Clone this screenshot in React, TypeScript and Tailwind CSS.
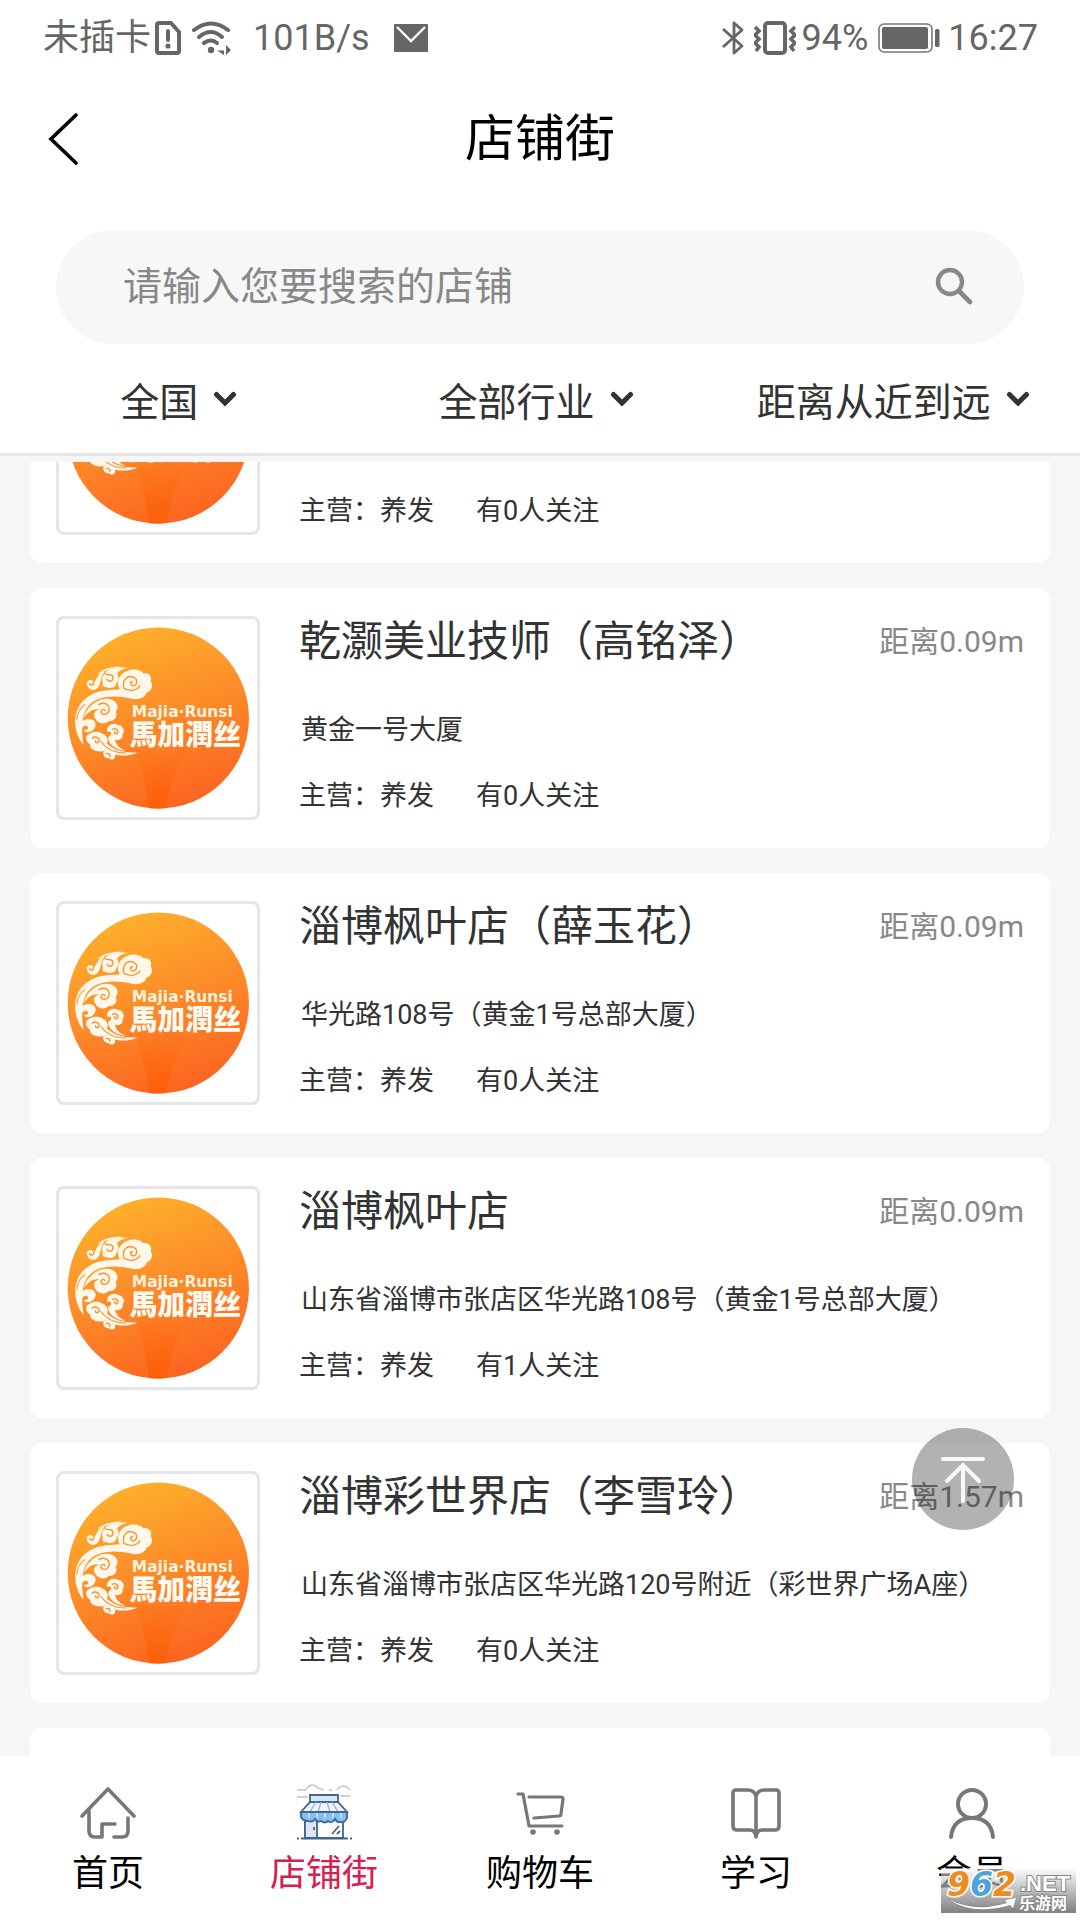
import { useLayoutEffect, useRef, useState } from "react";

type Shop = {
  id: number;
  name: string;
  address: string;
  business: string;
  followers: number;
  distance: string;
};

const shops: Shop[] = [
  { id: 1, name: "乾灏美业技师", address: "黄金一号大厦", business: "养发", followers: 0, distance: "0.09m" },
  { id: 2, name: "乾灏美业技师（高铭泽）", address: "黄金一号大厦", business: "养发", followers: 0, distance: "0.09m" },
  { id: 3, name: "淄博枫叶店（薛玉花）", address: "华光路108号（黄金1号总部大厦）", business: "养发", followers: 0, distance: "0.09m" },
  { id: 4, name: "淄博枫叶店", address: "山东省淄博市张店区华光路108号（黄金1号总部大厦）", business: "养发", followers: 1, distance: "0.09m" },
  { id: 5, name: "淄博彩世界店（李雪玲）", address: "山东省淄博市张店区华光路120号附近（彩世界广场A座）", business: "养发", followers: 0, distance: "1.57m" },
  { id: 6, name: "淄博彩世界店", address: "山东省淄博市张店区华光路120号附近", business: "养发", followers: 0, distance: "1.57m" },
];

const filters = ["全国", "全部行业", "距离从近到远"];

function StatusBar() {
  return (
    <div className="flex items-center justify-between pl-[43px] pr-[42px] pt-3.5 h-[62px] text-[36px] text-[#666]">
      <div className="flex items-center">
        <span>未插卡</span>
        <svg className="ml-1 w-[26px] h-[34px]" viewBox="0 0 26 34" fill="none" stroke="currentColor" strokeWidth="4" strokeLinejoin="round">
          <path d="M4 2h12l8 9v19q0 2-2 2H4q-2 0-2-2V4q0-2 2-2z" />
          <path d="M13 10v9" strokeLinecap="round" />
          <circle cx="13" cy="25" r="2.6" fill="currentColor" stroke="none" />
        </svg>
        <svg className="ml-2.5 w-10 h-[34px]" viewBox="0 0 40 34" fill="none" stroke="currentColor" strokeWidth="4" strokeLinecap="round">
          <path d="M3 9Q20-4 37 9" />
          <path d="M8 16Q20 6 31 16" />
          <path d="M13 22Q20 17 26 22" />
          <circle cx="20" cy="29" r="3.2" fill="currentColor" stroke="none" />
          <path d="M33 24v10l-7-4.500h7zM35 34V24l5 5z" fill="currentColor" stroke="none" />
        </svg>
        <span className="ml-[22px]">101B/s</span>
        <svg className="ml-6 w-[34px] h-7" viewBox="0 0 34 28">
          <rect width="34" height="28" rx="1" fill="#666" />
          <path d="M3 3l14 14L31 3" fill="none" stroke="#fff" strokeWidth="2.4" />
        </svg>
      </div>
      <div className="flex items-center">
        <svg className="w-[22px] h-9" viewBox="0 0 22 36" fill="none" stroke="currentColor" strokeWidth="2.8" strokeLinejoin="round">
          <path d="M1 9l19 17-8 7V3l8 7L1 27" />
        </svg>
        <svg className="ml-2.5 w-[42px] h-9" viewBox="0 0 42 36" fill="none" stroke="currentColor" strokeWidth="4">
          <rect x="11" y="3" width="20" height="30" rx="3" />
          <path d="M1 7l4 4-4 4 4 4-4 4 4 4-3 4M41 7l-4 4 4 4-4 4 4 4-4 4 3 4" strokeWidth="3.6" />
        </svg>
        <span className="ml-1.5">94%</span>
        <svg className="ml-2.5 w-[62px] h-[30px]" viewBox="0 0 62 30">
          <rect x="1" y="1" width="53" height="28" rx="5" fill="none" stroke="#777" strokeWidth="1.6" />
          <rect x="4" y="4" width="46" height="22" rx="2" fill="#666" />
          <rect x="57" y="6" width="4.5" height="18" rx="1.5" fill="#666" />
        </svg>
        <span className="ml-2">16:27</span>
      </div>
    </div>
  );
}

function ShopLogo() {
  return (
    <svg className="w-full h-full" viewBox="59 117 590 590" role="img" aria-label="馬加潤丝">
      <defs>
        <linearGradient id="orb" x1="0.25" y1="0" x2="0.6" y2="1">
          <stop offset="0" stopColor="#fdb32b" />
          <stop offset="0.45" stopColor="#fd9029" />
          <stop offset="1" stopColor="#fc6420" />
        </linearGradient>
        <linearGradient id="beam" x1="0" y1="0" x2="0" y2="1">
          <stop offset="0" stopColor="#fc6a0c" stopOpacity="0.1" />
          <stop offset="1" stopColor="#fc5f08" />
        </linearGradient>
      </defs>
      <circle cx="355" cy="412" r="270" fill="url(#orb)" />
      <path d="M285 505L442 505Q398 580 378 680Q350 684 326 680Q318 590 285 505z" fill="url(#beam)" />
      <g transform="translate(90 246)" fill="#fff8ea">
        <path d="M42 246C8 205 8 140 48 108C85 78 120 84 150 80C138 62 148 34 172 26C192 16 214 24 220 32C238 30 248 44 242 56C252 72 242 88 230 90C228 104 206 114 184 108C150 100 112 98 80 112C48 128 30 160 42 246z" />
        <path d="M64 130C84 108 122 100 138 120C148 134 142 142 138 148C146 164 130 178 118 174C106 188 84 182 78 170C68 156 76 140 90 142C76 136 56 146 44 166C46 150 54 138 64 130z" />
        <path d="M30 190C34 172 54 164 70 172C82 180 80 194 70 202C62 212 44 210 42 200C48 204 56 200 56 194C52 186 40 188 36 202z" />
        <path d="M50 222C62 204 88 204 98 212C112 216 118 232 112 242C132 260 160 272 204 268C174 284 130 280 108 262C90 272 58 262 62 246C52 240 48 230 50 222z" />
        <path d="M112 206C110 190 128 178 144 186C160 188 168 206 158 214C162 228 146 236 136 230C138 246 152 258 168 264C136 262 112 240 116 222C122 220 126 214 124 208z" />
        <path d="M102 264C116 258 134 266 136 276C140 288 126 294 118 286C104 286 98 274 102 264z" />
        <path d="M52 60C60 48 70 54 74 60C82 50 84 32 108 22C92 40 96 62 84 76C72 90 50 78 52 60z" />
        <path d="M100 62C92 40 108 24 132 18L176 16C156 20 146 26 142 34C150 44 146 56 140 62C138 76 122 80 112 74C102 76 96 70 100 62z" />
        <path d="M82 36C104 14 140 10 178 15C142 15 108 22 82 36z" />
      </g>
      <g transform="translate(90 246)" fill="none" stroke="#fb9028" strokeWidth="4" strokeLinecap="round">
        <path d="M162 72C158 50 174 38 190 44C206 50 202 72 188 70C180 68 180 58 188 58M160 76C176 88 202 86 210 70" />
        <path d="M88 126C106 116 122 128 118 144C114 158 96 158 94 148C94 140 102 138 106 144" />
        <path d="M106 34C116 40 130 32 130 46C130 58 114 60 112 50M60 64C66 72 74 66 72 60" />
        <path d="M22 170C24 150 34 134 46 126" strokeWidth="3" />
        <path d="M68 226C78 218 92 226 88 236C84 242 76 240 78 234M128 200C136 194 148 202 144 210C140 216 132 212 136 206M110 272C118 270 124 276 120 280" />
        <path d="M94 236C112 262 140 270 168 270" strokeWidth="3" />
      </g>
      <text x="276" y="409" fill="#fff3df" className="font-['DejaVu_Sans'] text-[46px] font-bold">
        Majia·Runsi
      </text>
      <text x="269" y="492" fill="#fffaf2" className="font-['Noto_Sans_CJK_TC'] text-[83px] font-black">
        馬加潤丝
      </text>
    </svg>
  );
}

function ShopCard({ shop }: { shop: Shop }) {
  return (
    <article className="flex h-[260px] shrink-0 rounded-xl bg-white pl-[26px] pr-[26px] pt-[28px]">
      <div className="h-[204px] w-[204px] shrink-0 rounded-lg border-[3px] border-[#e6e6e6]">
        <ShopLogo />
      </div>
      <div className="ml-[39px] flex-1 pt-0.5 text-[27px] leading-10 text-[#333]">
        <div className="flex h-12 items-center justify-between">
          <h2 className="text-[42px] leading-12">{shop.name}</h2>
          <span className="text-[30px] text-[#888]">距离{shop.distance}</span>
        </div>
        <p className="mt-11 pl-0.5">{shop.address}</p>
        <p className="mt-[26px] flex gap-[42px]">
          <span>主营：{shop.business}</span>
          <span>有{shop.followers}人关注</span>
        </p>
      </div>
    </article>
  );
}

function HomeIcon() {
  return (
    <svg className="h-14 w-14" viewBox="0 0 56 56" fill="none" stroke="#777" strokeWidth="3.6" strokeLinecap="round" strokeLinejoin="round">
      <path d="M2 32L28 5l26 27" />
      <path d="M9 27v20q0 6 6 6h7V40h13" />
      <path d="M48 34v13q0 6-6 6h-8" />
    </svg>
  );
}

function StoreIcon() {
  return (
    <svg className="h-14 w-14" viewBox="0 0 56 56" fill="none" stroke="#41648f" strokeWidth="1.8">
      <path d="M1 6h9q5-9 12-2l6 2M33 6h3M41 6q6-8 13 0M1 13h11M44 12h10" stroke="#c4c4c4" strokeWidth="1.4" />
      <path d="M9 34h38v20H9z" fill="#fdfdfd" />
      <path d="M9 34h12v20H9z" fill="#dfe6ef" />
      <path d="M14 11h28v7H14z" fill="#d5e8fb" />
      <path d="M14 18h28l9 10H5z" fill="#eef6fd" />
      <path d="M20 18l-6 10M25 18l-3 10M31 18l3 10M36 18l6 10" stroke="#8eb2d8" strokeWidth="1.3" />
      <path d="M5 28h46v6q-2 5-6 4-4 1-6-3-3 5-7 2-3 3-7 0-4 2-6-2-3 4-7 2-5 0-7-4z" fill="#83bff5" />
      <path d="M13 29v5M21 29v5M29 29v5M37 29v5M45 29v5" stroke="#c5e1fb" />
      <path d="M18 43v3M36 50l7-8M41 50l3-3" />
      <path d="M5 54.5h47M1 54.5h2M54 54.5h2" />
    </svg>
  );
}

function CartIcon() {
  return (
    <svg className="h-14 w-14" viewBox="0 0 56 56" fill="none" stroke="#777" strokeWidth="3.2" strokeLinecap="round" strokeLinejoin="round">
      <path d="M6 10h5l6 32h33" />
      <path d="M17 13h32q2 0 2 2l-2 15q0 2-2 2l-25 2" />
      <circle cx="21" cy="48" r="2.8" fill="#777" stroke="none" />
      <circle cx="45" cy="48" r="2.8" fill="#777" stroke="none" />
    </svg>
  );
}

function BookIcon() {
  return (
    <svg className="h-14 w-14" viewBox="0 0 56 56" fill="none" stroke="#777" strokeWidth="3.6" strokeLinecap="round" strokeLinejoin="round">
      <path d="M28 12q-2-6-8-6H8q-3 0-3 3v33q0 4 4 4h13q5 0 6 7 1-7 6-7h13q4 0 4-4V9q0-3-3-3H36q-6 0-8 6z" />
      <path d="M28 12v40" />
    </svg>
  );
}

function MemberIcon() {
  return (
    <svg className="h-14 w-14" viewBox="0 0 56 56" fill="none" stroke="#777" strokeWidth="4" strokeLinecap="round">
      <circle cx="28" cy="20" r="14" />
      <path d="M7 53q2-19 21-19t21 19" />
    </svg>
  );
}

const tabs = [
  { label: "首页", Icon: HomeIcon },
  { label: "店铺街", Icon: StoreIcon },
  { label: "购物车", Icon: CartIcon },
  { label: "学习", Icon: BookIcon },
  { label: "会员", Icon: MemberIcon },
];

function Watermark() {
  return (
    <div className="pointer-events-none absolute bottom-[7px] right-1 h-[45px] w-[135px] bg-linear-to-b from-white/50 to-[#808080]">
      <svg className="h-full w-full" viewBox="0 0 135 45">
        <g className="font-['DejaVu_Sans'] text-[33px] font-bold italic" stroke="#fff" strokeWidth="3" paintOrder="stroke">
          <text x="6" y="28">
            <tspan fill="#f08c1e">9</tspan>
            <tspan fill="#4ea3dc">6</tspan>
            <tspan fill="#f08c1e">2</tspan>
          </text>
        </g>
        <g fill="#fff" stroke="#888" strokeWidth="2" paintOrder="stroke">
          <path d="M7 31Q34 45 66 35l-2-3 11-2-3 10-3-3Q32 48 7 31z" strokeWidth="1" />
          <text x="79" y="23" className="font-['Liberation_Sans'] text-[22px] font-bold">.NET</text>
          <text x="78" y="41" className="font-['Noto_Sans_CJK_SC'] text-[16px] font-bold">乐游网</text>
        </g>
      </svg>
    </div>
  );
}

export default function App() {
  const listRef = useRef<HTMLElement>(null);
  const [keyword, setKeyword] = useState("");
  const [activeTab, setActiveTab] = useState("店铺街");

  // open the list part way down, past the first card's title
  useLayoutEffect(() => {
    if (listRef.current) listRef.current.scrollTop = 184;
  }, []);

  const scrollToTop = () => listRef.current?.scrollTo({ top: 0, behavior: "smooth" });

  return (
    <div className="relative flex h-screen flex-col bg-white font-['Roboto','Noto_Sans_CJK_SC',sans-serif]">
      <StatusBar />

      <header className="grid h-[152px] grid-cols-[1fr_auto_1fr] items-center px-12 pt-0.5">
        <button type="button" aria-label="返回" className="w-8">
          <svg className="h-[54px] w-8" viewBox="0 0 32 54" fill="none" stroke="#000" strokeWidth="3.6" strokeLinecap="round">
            <path d="M28 3L3 27l25 24" />
          </svg>
        </button>
        <h1 className="text-[50px] text-black">店铺街</h1>
      </header>

      <form
        className="mx-[56px] mt-4 flex h-[114px] items-center rounded-full bg-[#f7f7f7] pl-[67px] pr-[50px]"
        onSubmit={(e) => e.preventDefault()}
      >
        <input
          type="text"
          value={keyword}
          onChange={(e) => setKeyword(e.target.value)}
          aria-label="搜索店铺"
          placeholder="请输入您要搜索的店铺"
          className="min-w-0 flex-1 bg-transparent text-[39px] outline-none placeholder:text-[#888]"
        />
        <button type="submit" aria-label="搜索">
          <svg className="h-10 w-10" viewBox="0 0 40 40" fill="none" stroke="#888" strokeLinecap="round">
            <circle cx="16" cy="15" r="12" strokeWidth="4.4" />
            <path d="M25 24l11 11" strokeWidth="4.6" />
          </svg>
        </button>
      </form>

      <div className="grid h-[112px] grid-cols-3 border-b-[3px] border-[#e6e6e6] pr-2 pt-2.5">
        {filters.map((label) => (
          <button key={label} type="button" className="flex items-center justify-center gap-[15px] whitespace-nowrap text-[39px] text-[#333]">
            {label}
            <svg className="mb-2.5 h-4 w-6" viewBox="0 0 24 16" fill="none" stroke="#333" strokeWidth="5" strokeLinecap="round">
              <path d="M3.500 3.500L12 12l8.500-8.500" />
            </svg>
          </button>
        ))}
      </div>

      <main
        ref={listRef}
        className="flex min-h-0 flex-1 flex-col gap-[25px] overflow-y-auto border-t-[6px] border-[#f6f6f6] bg-[#f6f6f6] px-[30px] py-[25px] [scrollbar-width:none]"
      >
        {shops.map((shop) => (
          <ShopCard key={shop.id} shop={shop} />
        ))}
      </main>

      <button
        type="button"
        aria-label="回到顶部"
        onClick={scrollToTop}
        className="absolute bottom-[390px] right-[66px] flex h-[102px] w-[102px] items-center justify-center rounded-full bg-black/30"
      >
        <svg className="h-12 w-11" viewBox="0 0 44 48" fill="none" stroke="#fff" strokeOpacity="0.9" strokeWidth="4" strokeLinecap="round">
          <path d="M2 4h40M22 10v36M6 26l16-16 16 16" />
        </svg>
      </button>

      <nav className="grid h-[164px] grid-cols-5 pt-7">
        {tabs.map(({ label, Icon }) => (
          <button
            key={label}
            type="button"
            onClick={() => setActiveTab(label)}
            className={`flex flex-col items-center gap-2.5 text-[36px] ${activeTab === label ? "text-[#d6204e]" : "text-black"}`}
          >
            <Icon />
            <span className="leading-12">{label}</span>
          </button>
        ))}
      </nav>

      <Watermark />
    </div>
  );
}
